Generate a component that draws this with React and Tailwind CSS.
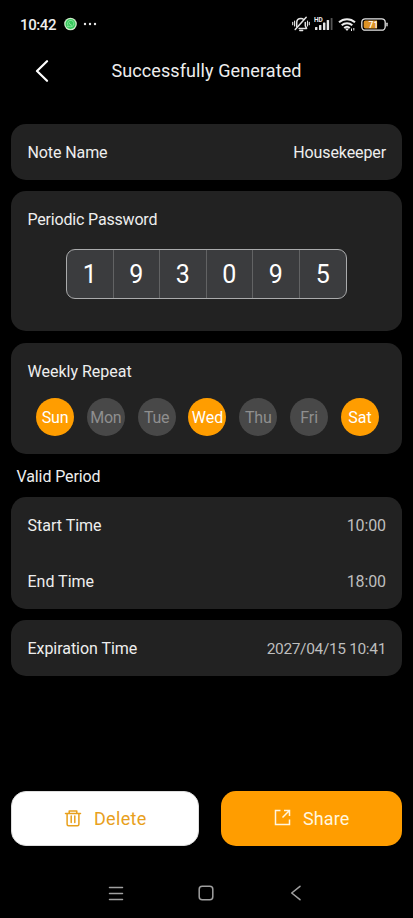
import React from "react";

const days = [
  ["Sun", true, "tracking-[-0.2px]"],
  ["Mon", false, "tracking-[-0.2px]"],
  ["Tue", false, "tracking-[-0.2px]"],
  ["Wed", true, "tracking-[0px]"],
  ["Thu", false, "tracking-[-0.2px]"],
  ["Fri", false, "tracking-[0px]"],
  ["Sat", true, "tracking-[0px]"],
];

function StatusBar() {
  return (
    <div className="flex h-12 items-center justify-between pl-5 pr-[25px]">
      <div className="flex items-center">
        <span className="w-[44px] pt-px text-[15px] font-medium leading-5 tracking-[-0.4px]">10:42</span>
        <svg width="14" height="14" viewBox="0 0 14 14" fill="none">
          <circle cx="6.500" cy="7" r="6.3" fill="#cdebc9" />
          <circle cx="6.500" cy="7" r="5" fill="#35c95b" />
          <path d="M3.500 10l.5-1.700a3.200 3.200 0 1 1 1.200 1.100z" stroke="#a3ecb0" strokeWidth=".7" />
          <path d="M5.200 5.600c.2 1.500 1.100 2.400 2.600 2.700" stroke="#b9f3c2" strokeWidth=".8" />
        </svg>
        <svg className="ml-[5px]" width="14" height="4" viewBox="0 0 14 4" fill="#e8e8e8">
          <circle cx="2" cy="2" r="1.2" />
          <circle cx="7" cy="2" r="1.2" />
          <circle cx="12" cy="2" r="1.2" />
        </svg>
      </div>
      <div className="flex items-center">
        <svg width="18" height="16" viewBox="0 0 18 16" fill="none" stroke="#e4e4e4" strokeWidth="1.500" strokeLinecap="round" strokeLinejoin="round">
          <path d="M4.700 10.500V6.800C4.700 4.200 6.500 2.600 9 2.600c1.100 0 2 .3 2.700.9M13.300 6.500v3.300l1.300 2.600H7.200M7.800 14.500h2.800" />
          <path d="M14.200 1.200 3.200 13.500" />
          <path d="M2.600 5v5M.7 6.300v2.400M15.500 5v5M17.300 6.300v2.400" strokeWidth="1.100" />
        </svg>
        <svg className="ml-1" width="20" height="16" viewBox="0 0 20 16">
          <text x="0" y="6" fill="#eeeeee" fontSize="6.500" fontWeight="700" fontFamily="Roboto, sans-serif">HD</text>
          <g fill="#e5e5e5">
            <rect x="1" y="11" width="2.400" height="3" rx=".6" />
            <rect x="5" y="9" width="2.400" height="5" rx=".6" />
            <rect x="9" y="6.500" width="2.400" height="7.500" rx=".6" />
            <rect x="12.700" y="4" width="2.400" height="10" rx=".6" />
          </g>
          <rect x="16.700" y="2" width="1.800" height="12" rx=".6" fill="#555" />
        </svg>
        <svg className="ml-1" width="18" height="15" viewBox="0 0 18 15" fill="none" stroke="#ededed" strokeWidth="2">
          <path d="M1 5.300c4.500-4.200 11.500-4.200 16 0M3.700 8.300c3-2.800 7.600-2.800 10.600 0M6.200 11c1.600-1.400 4-1.400 5.600 0" />
          <path d="M7 11.500h4L9 14z" fill="#ededed" stroke="none" />
          <path d="M13.500 11.500v2.500M15.800 11v2.500" strokeWidth="1" />
        </svg>
        <svg className="ml-[5px]" width="27" height="13" viewBox="0 0 27 13">
          <rect x=".8" y=".8" width="23.400" height="11.400" rx="3.500" fill="#000" stroke="#e5e5e5" strokeWidth="1.300" />
          <path d="M4.500 2.500H16v8H4.500a1.800 1.800 0 0 1-1.800-1.800V4.300a1.800 1.800 0 0 1 1.800-1.800z" fill="#dc9226" />
          <rect x="25.300" y="4.500" width="1.400" height="4" rx=".7" fill="#ddd" />
          <text x="12.400" y="9.500" textAnchor="middle" fill="#fff" fontSize="8.500" fontWeight="500" fontFamily="Roboto, sans-serif">71</text>
        </svg>
      </div>
    </div>
  );
}

function Row({ label, value, labelClass, valueClass }) {
  return (
    <div className="flex h-14 items-center justify-between pt-px pl-[16.500px] pr-4">
      <span className={labelClass}>{label}</span>
      <span className={valueClass}>{value}</span>
    </div>
  );
}

export default function App() {
  return (
    <div className="flex h-[918px] w-[413px] flex-col overflow-hidden bg-black font-['Roboto',sans-serif] text-base leading-5 text-[#eeeeee]">
      <StatusBar />
      <header className="grid h-[46px] grid-cols-[72px_1fr_72px] items-center">
        <svg className="ml-[35px]" width="14" height="22" viewBox="0 0 14 22" fill="none" stroke="#fff" strokeWidth="2.200" strokeLinecap="round" strokeLinejoin="round">
          <path d="M12 1.200 2 11l10 9.800" />
        </svg>
        <h1 className="text-center text-lg tracking-[0.1px] whitespace-nowrap">Successfully Generated</h1>
      </header>

      <main className="mt-[29.500px] flex flex-col px-[11px]">
        <section className="rounded-[15px] bg-[#222222]">
          <Row label="Note Name" value="Housekeeper" labelClass="pt-px tracking-[-0.1px]" valueClass="pt-px tracking-[-0.100px]" />
        </section>

        <section className="mt-[11px] h-[140.500px] rounded-[15px] bg-[#222222] px-4 pt-[19px]">
          <h2 className="ml-[0.500px] tracking-[-0.180px]">Periodic Password</h2>
          <div className="mx-auto mt-[19px] grid h-[50px] w-[281px] grid-cols-6 divide-x divide-[#626364] overflow-hidden rounded-[9px] border border-[#aaabac] bg-[#3b3c3e]">
            {["1", "9", "3", "0", "9", "5"].map((digit, index) => (
              <span key={index} className="flex items-center justify-center pt-0.5 text-[25px] text-white">{digit}</span>
            ))}
          </div>
        </section>

        <section className="mt-[11.500px] h-[111.500px] rounded-[15px] bg-[#222222] px-4 pt-[19px]">
          <h2 className="ml-[0.500px] tracking-[0px]">Weekly Repeat</h2>
          <div className="mt-[16.500px] flex justify-between pl-[9px] pr-[7px]">
            {days.map(([day, active, tracking]) => (
              <span key={day} className={`flex size-[38px] items-center justify-center rounded-full pt-px ${tracking} ${active ? "bg-[#ff9d00] text-white" : "bg-[#484848] text-[#8f8f8f]"}`}>{day}</span>
            ))}
          </div>
        </section>

        <h2 className="mt-[12.500px] ml-[5.500px] tracking-[-0.100px]">Valid Period</h2>

        <section className="mt-[10.500px] rounded-[15px] bg-[#222222]">
          <Row label="Start Time" value="10:00" labelClass="tracking-[0px]" valueClass="tracking-[-0.100px] text-[#bebebe]" />
          <Row label="End Time" value="18:00" labelClass="tracking-[0px]" valueClass="tracking-[-0.100px] text-[#bebebe]" />
        </section>

        <section className="mt-[11px] rounded-[15px] bg-[#222222]">
          <Row label="Expiration Time" value="2027/04/15 10:41" labelClass="tracking-[-0.050px]" valueClass="text-[15.500px] tracking-[-0.350px] text-[#bebebe]" />
        </section>
      </main>

      <div className="mt-[115px] flex h-[55px] justify-between px-[11px] text-lg">
        <button className="flex w-[188px] items-center rounded-[15px] border border-[#dddddd] bg-white pl-[52px] text-[#e8a01c]">
          <svg className="mb-0.5" width="18" height="18" viewBox="0 0 18 18" fill="none" stroke="currentColor" strokeWidth="1.500" strokeLinecap="round" strokeLinejoin="round">
            <path d="M1.500 4.400h15M5.200 4V2h7.600v2M3.100 4.500v10.700c0 1 .5 1.500 1.500 1.500h8.800c1 0 1.500-.5 1.500-1.500V4.500M7.200 7v6.500M10.800 7v6.500" />
          </svg>
          <span className="ml-3 pt-px tracking-[0.300px]">Delete</span>
        </button>
        <button className="flex w-[181px] items-center rounded-[15px] bg-[#ff9d00] pl-[53px] text-[#fff6df]">
          <svg className="mb-0.5" width="17" height="17" viewBox="0 0 17 17" fill="none" stroke="currentColor" strokeWidth="1.500">
            <path d="M6.500 1.500h-5v14h14v-5M10 1.500h5.500V7M15.200 1.800 8.500 8.500" />
          </svg>
          <span className="ml-3 pt-px tracking-[0.1px]">Share</span>
        </button>
      </div>

      <nav className="mt-[38.500px] flex pl-[108px]">
        <svg width="16" height="17" viewBox="0 0 16 17" stroke="#a0a0a0" strokeWidth="1.500" strokeLinecap="round">
          <path d="M1.500 2.500h13M1.500 8.500h13M1.500 14.500h13" />
        </svg>
        <svg className="ml-[74px]" width="16" height="17" viewBox="0 0 16 17" fill="none" stroke="#a0a0a0" strokeWidth="1.500">
          <rect x="1.200" y="1.200" width="13.600" height="13.600" rx="3" />
        </svg>
        <svg className="ml-[76px]" width="12" height="17" viewBox="0 0 12 17" fill="none" stroke="#a0a0a0" strokeWidth="1.500" strokeLinecap="round" strokeLinejoin="round">
          <path d="M10 1.300 1.700 8l8.300 6.700" />
        </svg>
      </nav>
    </div>
  );
}
